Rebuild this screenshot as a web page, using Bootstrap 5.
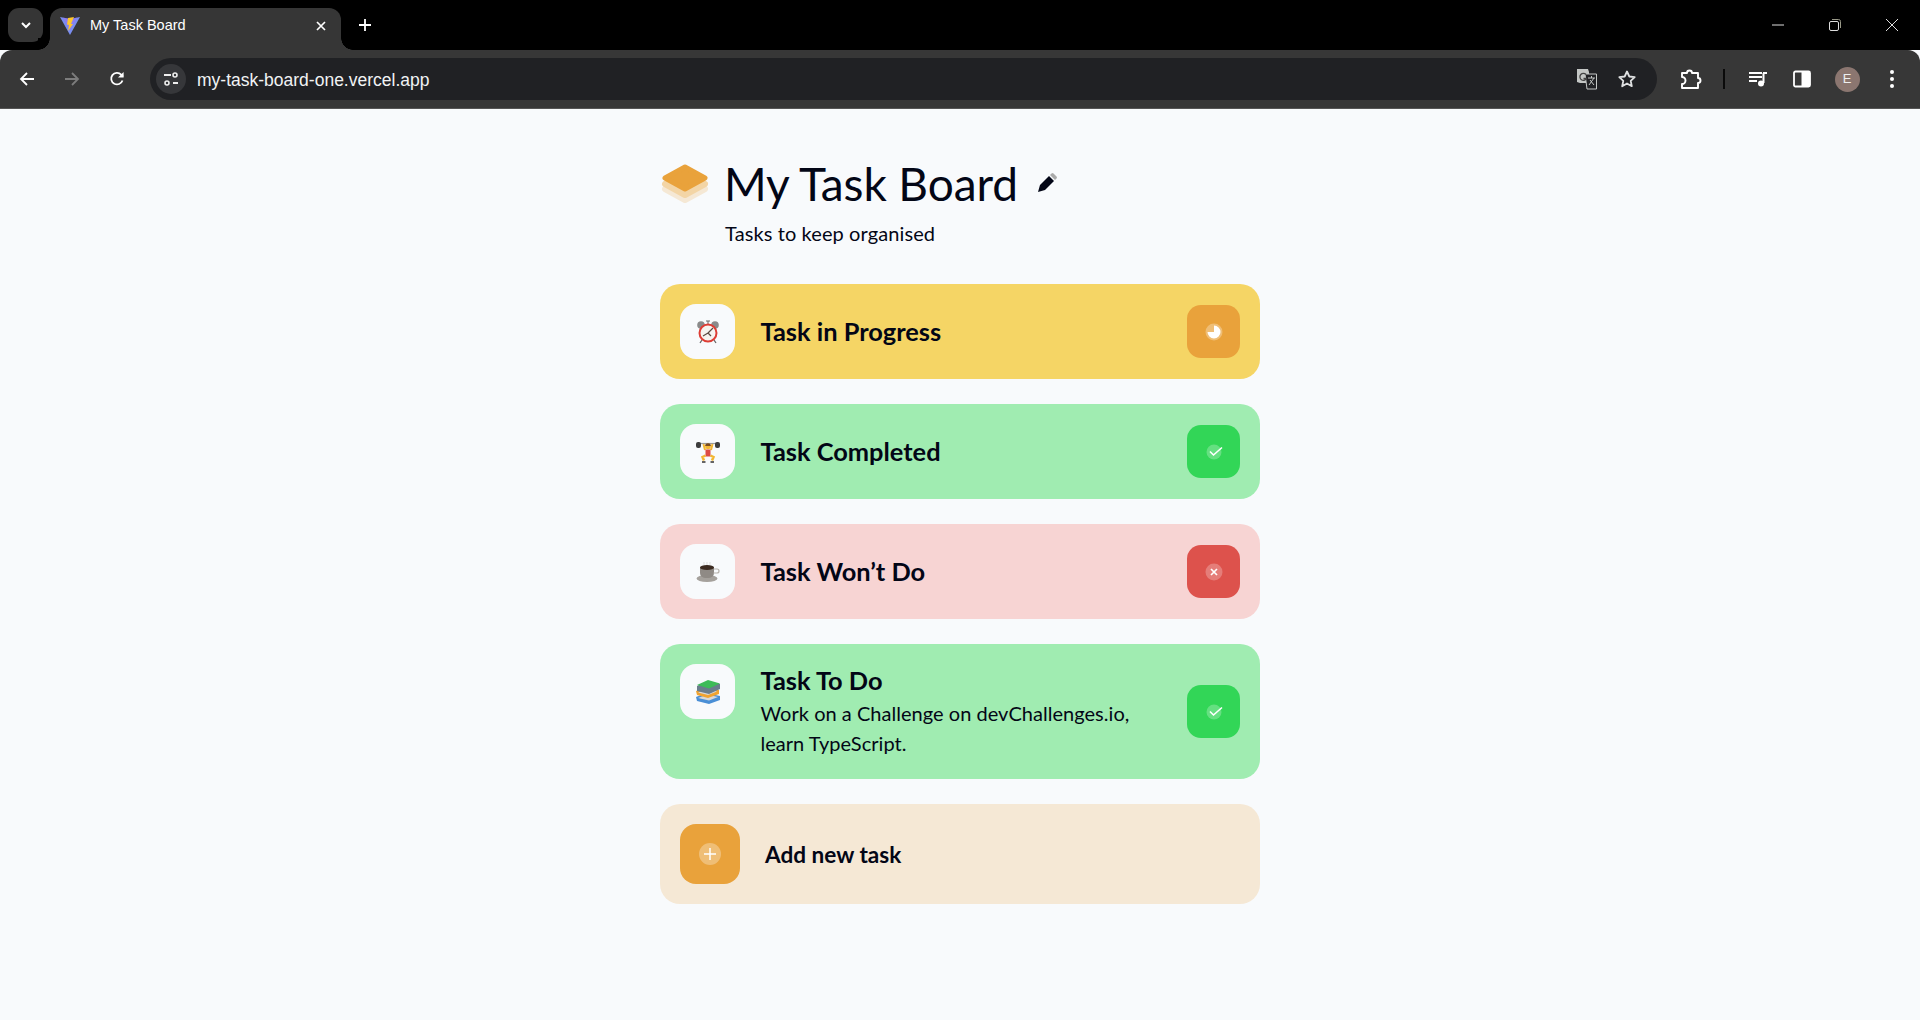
<!DOCTYPE html>
<html lang="en">

<head>
  <meta charset="UTF-8" />
  <meta name="viewport" content="width=device-width, initial-scale=1.0" />
  <title>My Task Board</title>
  <link href="https://cdn.jsdelivr.net/npm/bootstrap@5.3.3/dist/css/bootstrap.min.css" rel="stylesheet">
  <style>
    body { background: #f8fafc; color: #030616; font-family: Lato, "Liberation Sans", sans-serif; overflow: hidden; }

    /* browser chrome */
    .tabstrip { height: 50px; background: #000; color: #fff; font-family: "Liberation Sans", sans-serif; }
    .tab-drop { width: 35px; height: 34px; margin: 8px 7px 0 8px; background: #353535; border-radius: 11px; }
    .tab-item { width: 291px; height: 42px; margin-top: 8px; padding: 0 14px 6px 10px; background: #363636; border-radius: 12px 12px 0 0; font-size: 14.5px; position: relative; }
    .tab-item::before, .tab-item::after { content: ""; position: absolute; bottom: 0; width: 12px; height: 12px; background: radial-gradient(circle at var(--cx) 0, #000 11.5px, #363636 12px); }
    .tab-item::before { left: -12px; --cx: 0; }
    .tab-item::after { right: -12px; --cx: 100%; }
    .tab-fav { margin-right: 10px; }
    .tab-plus { margin-left: 17px; padding-bottom: 1px; }
    .win-btn { width: 57px; }
    .toolbar { height: 59px; background: #373737; border-radius: 12px 12px 0 0; border-bottom: 1px solid #555; padding: 0 0 0 11px; }
    .tool-btn { width: 32px; flex: none; }
    .next-btn { margin-left: 13px; }
    .omnibox { width: 1507px; height: 42px; flex: none; margin-left: 17px; background: #202124; border-radius: 21px; padding: 0 12px 0 6px; color: #f1f3f4; font-family: "Liberation Sans", sans-serif; font-size: 17.5px; }
    .omni-url { padding-top: 2px; }
    .site-chip { width: 30px; height: 30px; background: #36373a; border-radius: 50%; margin-right: 11px; }
    .omni-translate { margin-right: 19px; }
    .omni-star { margin-right: 8px; }
    .ext-btn { margin-left: 18px; }
    .tool-sep { width: 2px; height: 20px; flex: none; background: #0a0a0a; margin-left: 16px; }
    .queue-btn { margin-left: 17px; }
    .side-btn { margin-left: 12px; }
    .avatar-e { width: 25px; height: 25px; background: #8b7670; border-radius: 50%; color: #eee; font-size: 13px; font-family: "Liberation Sans", sans-serif; }

    /* board */
    .board-wrap { width: 600px; margin: 0 auto; padding-top: 52px; }
    .board-logo { width: 48px; margin-left: 1px; }
    .board-title { font-size: 46px; line-height: 46px; font-weight: 400; margin: 0 0 0 15px; letter-spacing: -0.08px; }
    .board-pencil { margin: -3px 0 0 19px; }
    .board-sub { margin: 13px 0 38px 65px; font-size: 20px; line-height: 26px; letter-spacing: 0.1px; }
    .task-list { gap: 25px; }
    .task-card { padding: 20px; border-radius: 20px; }
    .task-yellow { background: #f5d565; }
    .task-green { background: #a0ecb1; }
    .task-red { background: #f7d4d3; }
    .task-sand { background: #f5e8d5; }
    .emoji-box { width: 55px; height: 55px; flex: none; background: #f8fafc; border-radius: 16px; }
    .task-text { padding-left: 25.5px; min-width: 0; }
    .task-name { font-size: 25.4px; line-height: 30px; font-weight: 700; margin: -2px 0 0; }
    .task-name-tall { line-height: 35px; margin-top: -1px; }
    .task-desc { font-size: 20px; line-height: 30px; margin: 0; padding-bottom: 1px; width: 390px; letter-spacing: 0.03px; }
    .state-box { width: 53px; height: 53px; flex: none; border-radius: 14px; margin-left: auto; }
    .state-orange { background: #e9a23b; }
    .state-green { background: #32d657; }
    .state-red { background: #dd524c; }
    .add-box { width: 60px; height: 60px; flex: none; background: #e9a23b; border-radius: 16px; }
    .add-label { font-size: 22.6px; font-weight: 700; margin-left: 25px; padding-top: 2px; }
  </style>
</head>

<body>

  <!-- Tab strip -->
  <div class="tabstrip d-flex">
    <div class="tab-drop d-flex align-items-center justify-content-center">
      <svg width="12" height="12" viewBox="0 0 12 12"><path d="M2 4l4 4 4-4" fill="none" stroke="#fff" stroke-width="2"/></svg>
    </div>
    <div class="tab-item d-flex align-items-center">
      <svg class="tab-fav" width="20" height="20" viewBox="0 0 20 20">
        <path d="M0 1l10 2 10-2-10 18z" fill="#7a8df0"/>
        <path d="M3 1.500l7 1.500 7-1.500-7 13z" fill="#a06ff0" opacity=".5"/>
        <path d="M8 2l6-1-3 7 2 0-5 7 1-6-2-.5z" fill="#fdc72c"/>
      </svg>
      <span class="flex-grow-1">My Task Board</span>
      <svg width="12" height="12" viewBox="0 0 12 12"><path d="M2 2l8 8M10 2l-8 8" stroke="#fff" stroke-width="1.700"/></svg>
    </div>
    <div class="tab-plus d-flex align-items-center">
      <svg width="14" height="14" viewBox="0 0 14 14"><path d="M7 1v12M1 7h12" stroke="#fff" stroke-width="1.800"/></svg>
    </div>
    <div class="d-flex ms-auto">
      <div class="win-btn d-flex align-items-center justify-content-center">
        <svg width="14" height="14" viewBox="0 0 14 14"><path d="M1 7h12" stroke="#ddd" stroke-width="1"/></svg>
      </div>
      <div class="win-btn d-flex align-items-center justify-content-center">
        <svg width="14" height="14" viewBox="0 0 14 14"><rect x="1.500" y="3.500" width="9" height="9" rx="1.500" fill="none" stroke="#ddd"/><path d="M4 1.500h6.500a2 2 0 0 1 2 2V10" fill="none" stroke="#998"/></svg>
      </div>
      <div class="win-btn d-flex align-items-center justify-content-center">
        <svg width="14" height="14" viewBox="0 0 14 14"><path d="M1 1l12 12M13 1L1 13" stroke="#ddd" stroke-width="1"/></svg>
      </div>
    </div>
  </div>

  <!-- Toolbar -->
  <div class="toolbar d-flex align-items-center">
    <div class="tool-btn d-flex justify-content-center">
      <svg width="16" height="16" viewBox="0 0 16 16"><path d="M15 8H2M8 2L2 8l6 6" fill="none" stroke="#fff" stroke-width="1.800"/></svg>
    </div>
    <div class="tool-btn next-btn d-flex justify-content-center">
      <svg width="16" height="16" viewBox="0 0 16 16"><path d="M1 8h13M8 2l6 6-6 6" fill="none" stroke="#7c7c7c" stroke-width="1.800"/></svg>
    </div>
    <div class="tool-btn next-btn d-flex justify-content-center">
      <svg width="16" height="16" viewBox="0 0 16 16"><path d="M13.500 9.500A5.800 5.800 0 1 1 12.200 3.600L14 5.500" fill="none" stroke="#fff" stroke-width="1.800"/><path d="M14.600 1v5.600H9z" fill="#fff"/></svg>
    </div>
    <div class="omnibox d-flex align-items-center">
      <div class="site-chip d-flex align-items-center justify-content-center flex-shrink-0">
        <svg width="16" height="14" viewBox="0 0 16 14"><path d="M1 3h7M10 11h5" stroke="#eee" stroke-width="1.800"/><circle cx="12" cy="3" r="2" fill="none" stroke="#eee" stroke-width="1.600"/><circle cx="4" cy="11" r="2" fill="none" stroke="#eee" stroke-width="1.600"/></svg>
      </div>
      <span class="omni-url flex-grow-1">my-task-board-one.vercel.app</span>
      <svg class="omni-translate" width="22" height="22" viewBox="0 0 22 22">
        <path d="M1 1h11l1 3v11H4L1 14z" fill="#c4c7c5"/>
        <path d="M9 6h11.500v15H11z" fill="#202124" stroke="#c4c7c5" stroke-width="1"/>
        <path d="M10 6.500a3.500 3.500 0 1 0 .5 4H7.500" fill="none" stroke="#444" stroke-width="1.300"/>
        <path d="M12 10h7M15.500 8v2M13 17l5-7M14 12l4 5" fill="none" stroke="#c4c7c5" stroke-width="1"/>
      </svg>
      <svg class="omni-star" width="20" height="20" viewBox="0 0 20 20"><path d="M10 2.500l2.300 5 5.400.6-4 3.700 1.100 5.400L10 14.500l-4.800 2.700 1.100-5.400-4-3.700 5.400-.6z" fill="none" stroke="#dfe1e2" stroke-width="1.800" stroke-linejoin="round"/></svg>
    </div>
    <div class="tool-btn ext-btn d-flex justify-content-center">
      <svg width="22" height="22" viewBox="0 0 22 22"><path d="M2 5h5a2.500 2.500 0 0 1 5 0h6v5a2.500 2.500 0 0 1 0 5v5H2v-4a2.500 2.500 0 0 0 0-7z" fill="none" stroke="#fff" stroke-width="1.900" stroke-linejoin="round"/></svg>
    </div>
    <div class="tool-sep"></div>
    <div class="tool-btn queue-btn d-flex justify-content-center">
      <svg width="20" height="18" viewBox="0 0 20 18"><path d="M1 3h13M1 7h13M1 11h8" stroke="#fff" stroke-width="1.800"/><path d="M15 3h4M15.500 3v10" stroke="#fff" stroke-width="2"/><circle cx="13" cy="13.500" r="3" fill="#fff"/></svg>
    </div>
    <div class="tool-btn side-btn d-flex justify-content-center">
      <svg width="18" height="18" viewBox="0 0 18 18"><rect x="1" y="1.500" width="16" height="15" rx="1.500" fill="none" stroke="#fff" stroke-width="1.800"/><rect x="8.500" y="1.500" width="8.500" height="15" fill="#fff"/></svg>
    </div>
    <div class="tool-btn next-btn d-flex justify-content-center">
      <div class="avatar-e d-flex align-items-center justify-content-center">E</div>
    </div>
    <div class="tool-btn next-btn d-flex justify-content-center">
      <svg width="6" height="20" viewBox="0 0 6 20"><circle cx="3" cy="3" r="2" fill="#fff"/><circle cx="3" cy="10" r="2" fill="#fff"/><circle cx="3" cy="17" r="2" fill="#fff"/></svg>
    </div>
  </div>

  <!-- Board -->
  <div class="board-wrap">
    <div class="d-flex align-items-center">
      <svg class="board-logo" height="40" viewBox="0 0 48 40">
        <path d="M24 14L44 25 24 36 4 25z" fill="#f5e8d5" stroke="#f5e8d5" stroke-width="6" stroke-linejoin="round"/>
        <path d="M24 9L44 20 24 31 4 20z" fill="#f3d5a6" stroke="#f3d5a6" stroke-width="6" stroke-linejoin="round"/>
        <path d="M24 3L44 14 24 25 4 14z" fill="#e9a23b" stroke="#e9a23b" stroke-width="5" stroke-linejoin="round"/>
      </svg>
      <h1 class="board-title">My Task Board</h1>
      <svg class="board-pencil" width="20" height="20" viewBox="0 0 20 20">
        <path d="M1 19l2-7L12 3l5 5-9 9z" fill="#030616"/>
        <path d="M13 2l1.500-1.500a1.500 1.500 0 0 1 2 0l3 3a1.500 1.500 0 0 1 0 2L18 7z" fill="#aaa"/>
      </svg>
    </div>
    <p class="board-sub">Tasks to keep organised</p>

    <div class="task-list d-flex flex-column">
      <div class="task-card task-yellow d-flex align-items-center">
        <div class="emoji-box d-flex align-items-center justify-content-center">
          <svg width="24" height="24" viewBox="0 0 24 24">
            <circle cx="5" cy="5" r="3.800" fill="#8a8a8a"/><circle cx="19" cy="5" r="3.800" fill="#8a8a8a"/>
            <path d="M12 1v3M10 1h4" stroke="#666" stroke-width="1"/>
            <path d="M6 20l-2 3M18 20l2 3" stroke="#666" stroke-width="1.300"/>
            <circle cx="12" cy="13" r="8.500" fill="#f6f3ef" stroke="#dd3d35" stroke-width="2"/>
            <path d="M12 13l5-5M12 13l-5 3M12 13l3 3" stroke="#5b4a42" stroke-width="1.200"/>
          </svg>
        </div>
        <div class="task-text"><h2 class="task-name">Task in Progress</h2></div>
        <div class="state-box state-orange d-flex align-items-center justify-content-center">
          <svg width="18" height="18" viewBox="0 0 18 18"><circle cx="9" cy="9" r="8.500" fill="#fff" opacity=".3"/><path d="M9 2.500a6.500 6.500 0 1 1-6.500 6.500H9z" fill="#fff"/></svg>
        </div>
      </div>

      <div class="task-card task-green d-flex align-items-center">
        <div class="emoji-box d-flex align-items-center justify-content-center">
          <svg width="24" height="22" viewBox="0 0 24 22">
            <path d="M3 2.500h18" stroke="#999" stroke-width="1.200"/>
            <rect x="0" y="1" width="5" height="6" rx="2" fill="#3d3d3d"/><rect x="19" y="1" width="5" height="6" rx="2" fill="#3d3d3d"/>
            <path d="M7.500 3l1.500 6M16.500 3l-1.500 6" stroke="#f2b632" stroke-width="2"/>
            <circle cx="12" cy="5.500" r="2.800" fill="#f2b632"/><path d="M9.200 5a2.800 2.800 0 0 1 5.600 0z" fill="#7a4a1e"/>
            <rect x="9.500" y="8.500" width="5" height="7" fill="#dd4b45"/>
            <path d="M9.500 14.500l-3 1.500 1.500 3.500M14.500 14.500l3 1.500-1.500 3.500" fill="none" stroke="#f2b632" stroke-width="2.500"/>
            <path d="M6 21h3.500M14.500 21H18" stroke="#333" stroke-width="1.500"/>
          </svg>
        </div>
        <div class="task-text"><h2 class="task-name">Task Completed</h2></div>
        <div class="state-box state-green d-flex align-items-center justify-content-center">
          <svg width="20" height="20" viewBox="0 0 20 20"><circle cx="10" cy="10" r="7.500" fill="#fff" opacity=".25"/><path d="M6 9.500l3.500 3.500L18 5.500" fill="none" stroke="#fff" stroke-width="1.600"/></svg>
        </div>
      </div>

      <div class="task-card task-red d-flex align-items-center">
        <div class="emoji-box d-flex align-items-center justify-content-center">
          <svg width="24" height="20" viewBox="0 0 24 20">
            <path d="M8 0v3M11 0v3M14 0v3" stroke="#ddd" stroke-width="1"/>
            <ellipse cx="11" cy="16.500" rx="10.500" ry="3.500" fill="#a5a19c"/>
            <path d="M4 5h14v6a5 5 0 0 1-5 5H9a5 5 0 0 1-5-5z" fill="#8f8a85"/>
            <ellipse cx="11" cy="5.500" rx="7" ry="2.500" fill="#3b2a20"/>
            <path d="M18 7h3a2 2 0 0 1 0 4h-3.500" fill="none" stroke="#b5b1ab" stroke-width="1.200"/>
          </svg>
        </div>
        <div class="task-text"><h2 class="task-name">Task Won’t Do</h2></div>
        <div class="state-box state-red d-flex align-items-center justify-content-center">
          <svg width="18" height="18" viewBox="0 0 18 18"><circle cx="9" cy="9" r="8.500" fill="#fff" opacity=".25"/><path d="M6 6l6 6M12 6l-6 6" stroke="#fff" stroke-width="1.700"/></svg>
        </div>
      </div>

      <div class="task-card task-green d-flex align-items-start">
        <div class="emoji-box d-flex align-items-center justify-content-center">
          <svg width="24" height="24" viewBox="0 0 24 24">
            <path d="M0 17l10-4 14 3v4l-11 4-12-3z" fill="#4a8fd6"/>
            <path d="M2 18l11 2.500 9-3.500-11-2.500z" fill="#d8d8d8"/>
            <path d="M0 11l11-4 12 3v4l-11 4-11-3z" fill="#f0a330"/>
            <path d="M2 12.500l10 2.500 9-3.500-10-2.500z" fill="#d8d8d8"/>
            <path d="M1 6l11-5 12 3v5l-11 5-12-3z" fill="#6a7d8c"/>
            <path d="M1 5l11-5 12 3.500-11 5z" fill="#3dbb58"/>
          </svg>
        </div>
        <div class="task-text">
          <h2 class="task-name task-name-tall">Task To Do</h2>
          <p class="task-desc">Work on a Challenge on devChallenges.io, learn TypeScript.</p>
        </div>
        <div class="state-box state-green d-flex align-items-center justify-content-center align-self-center">
          <svg width="20" height="20" viewBox="0 0 20 20"><circle cx="10" cy="10" r="7.500" fill="#fff" opacity=".25"/><path d="M6 9.500l3.500 3.500L18 5.500" fill="none" stroke="#fff" stroke-width="1.600"/></svg>
        </div>
      </div>

      <div class="task-card task-sand d-flex align-items-center">
        <div class="add-box d-flex align-items-center justify-content-center">
          <svg width="22" height="22" viewBox="0 0 22 22"><circle cx="11" cy="11" r="11" fill="#fff" opacity=".3"/><path d="M11 5v12M5 11h12" stroke="#fff" stroke-width="1.500"/></svg>
        </div>
        <span class="add-label">Add new task</span>
      </div>
    </div>
  </div>

  <script src="https://cdn.jsdelivr.net/npm/bootstrap@5.3.3/dist/js/bootstrap.bundle.min.js"></script>
</body>

</html>
